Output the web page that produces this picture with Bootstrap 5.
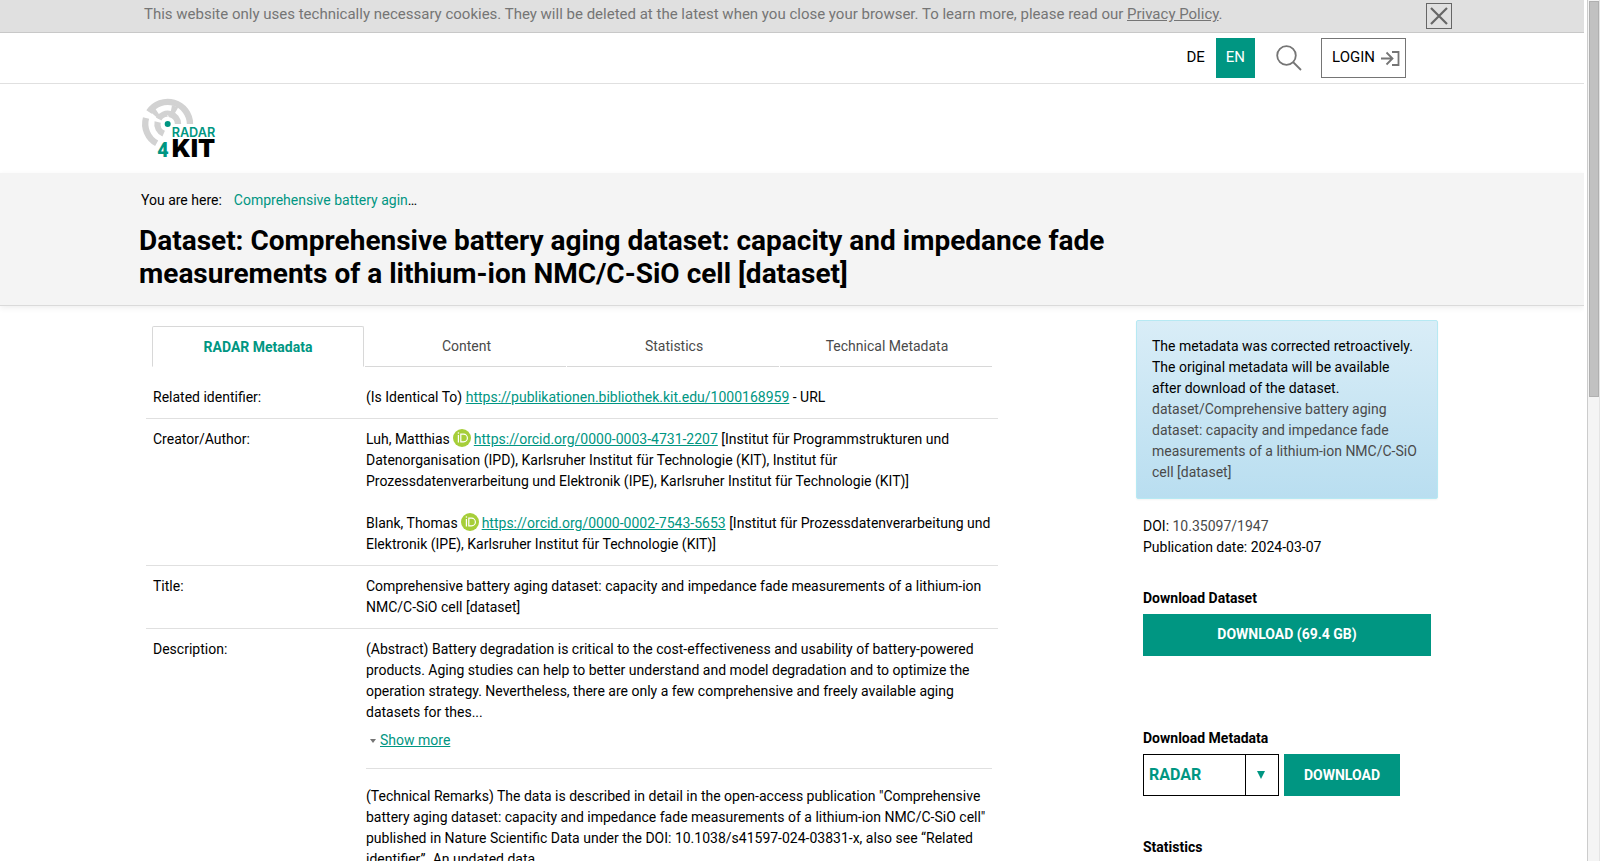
<!DOCTYPE html>
<html lang="en">
<head>
<meta charset="utf-8">
<meta name="viewport" content="width=device-width, initial-scale=1">
<title>Dataset: Comprehensive battery aging dataset</title>
<link href="https://cdn.jsdelivr.net/npm/bootstrap@5.3.0/dist/css/bootstrap.min.css" rel="stylesheet">
<style>
:root { --kit: #009682; --line: #e0e0e0; }
body { font-family: Roboto, "Liberation Sans", sans-serif; font-size: 14px; line-height: 21px; color: #000; background: #fff; }
a { color: var(--kit); }
.page-body { min-width: 0; }
.scroll-gutter { flex: 0 0 13px; margin-left: 3px; padding: 1px 0 0 1px; background: #f4f4f4; border-left: 1px solid #ccc; border-right: 1px solid #e4e4e4; }
.scroll-thumb { height: 46%; background: #c1c1c1; border: 1px solid #b0b0b0; }

.cookie-bar { background: #e0e0e0; border-bottom: 1px solid #c8c8c8; color: #757575; font-size: 15px; height: 33px; }
.cookie-bar .container { padding-right: 0; }
.cookie-bar a { color: #757575; }
.cookie-bar p { line-height: 28px; }
.close-btn { width: 26px; height: 26px; margin: 3px 0 0; border: 1px solid #666; background: none; padding: 0; }

.top-nav { border-bottom: 1px solid var(--line); height: 51px; font-size: 15px; }
.top-nav .container { padding-right: 46px; }
.lang-link { line-height: 38px; height: 40px; padding: 0 10px; color: #000; text-decoration: none; }
.lang-link.current { background: var(--kit); color: #fff; }
.lang-link:not(.current) { padding-right: 11px; }
.search-btn { border: 0; background: none; padding: 0; margin: 0 19px 0 21px; height: 40px; }
.login-btn { height: 40px; border: 1px solid #757575; background: #fff; color: #000; padding: 0 5px 0 10px; gap: 6px; line-height: 36px; }
.login-btn svg { margin-top: 12px; }
.search-btn svg { display: block; margin-top: 0; }

.brand-row { height: 89px; padding-top: 14px; }
.brand-row .container { padding-left: 9px; }
.title-band { background: #f4f4f4; border-bottom: 1px solid #dadada; box-shadow: 0 2px 6px rgba(0,0,0,.07); padding: 17px 0 15px; }
.title-band .container { padding-left: 7px; }
.crumbs { padding-left: 2px; gap: 12px; }
.title-band h1 { font-size: 28px; line-height: 33px; font-weight: 700; margin: 13px 0 0; max-width: 1000px; }

.content-row { padding: 14px 14px 0; }
.meta-col { flex: 0 1 852px; padding-top: 6px; min-width: 0; }
.side-col { flex: 0 0 302px; }
.meta-tabs { margin: 0 6px; border: 0; }
.meta-tabs .nav-item { flex: 213 1 0; }
.meta-tabs .nav-item.narrow { flex-grow: 202; }
.meta-tabs .nav-link { width: 100%; height: 41px; padding: 0 0 0 2px; margin: 0; line-height: 40px; border: 0; border-bottom: 1px solid #d8d8d8; border-radius: 0; color: #4a4a4a; }
.meta-tabs .nav-item + .nav-item { padding-left: 1px; }
.meta-tabs .nav-link.active { padding: 0; border: 1px solid #d8d8d8; border-bottom-color: #fff; border-radius: 2px 2px 0 0; line-height: 38px; color: var(--kit); font-weight: 700; background: #fff; }

.meta-table { width: 100%; margin-top: 10px; }
.meta-table tr + tr { border-top: 1px solid var(--line); }
.meta-table th { width: 220px; font-weight: 400; padding: 10px 7px; vertical-align: top; }
.meta-table td { padding: 10px 6px 10px 0; vertical-align: top; }
.orcid { width: 18px; height: 18px; margin: -5px -1px -1px 0; vertical-align: middle; }
.value-rule { border: 0; border-top: 1px solid var(--line); opacity: 1; margin: 17px 0; }
.more { margin-top: 7px; padding-left: 4px; gap: 4px; }

.notice { border: 1px solid #b6e9f3; border-radius: 2px; background: linear-gradient(#d9edf7, #b9def0); padding: 15px; box-shadow: 0 1px 2px rgba(0,0,0,.05); }
.soft { color: #4a4a4a; text-decoration: none; }
.side-inner { padding: 17px 7px 0; }
.side-head { font-size: 14px; line-height: 21px; font-weight: 700; margin: 0 0 5px; }
.published { margin-bottom: 30px; }
.kit-btn { background: var(--kit); border: 0; color: #fff; font-weight: 700; height: 42px; }
.dl-full { margin-bottom: 72px; padding-bottom: 3px; }
.dl-half { width: 116px; }
.format-row { gap: 5px; margin-bottom: 41px; }
.format-box { position: relative; width: 136px; }
.format-box select { appearance: none; width: 100%; height: 42px; border: 1px solid #000; border-radius: 0; background: #fff; color: var(--kit); font-size: 16px; font-weight: 700; padding: 0 5px 2px; }
.format-arrow { position: absolute; top: 0; right: 0; width: 34px; height: 42px; border-left: 1px solid #000; padding-right: 3px; pointer-events: none; }
</style>
</head>
<body>
<div class="d-flex vh-100 overflow-hidden">
  <div class="page-body flex-grow-1 overflow-hidden">
    <div class="cookie-bar">
      <div class="container d-flex justify-content-between align-items-start">
        <p class="mb-0">This website only uses technically necessary cookies. They will be deleted at the latest when you close your browser. To learn more, please read our <a href="#">Privacy Policy</a>.</p>
        <button type="button" class="close-btn d-flex justify-content-center align-items-center" aria-label="Close">
          <svg width="18" height="18" viewBox="0 0 18 18" stroke="#666" stroke-width="2.2"><path d="M1 1 17 17M17 1 1 17"/></svg>
        </button>
      </div>
    </div>

    <nav class="top-nav">
      <div class="container h-100 d-flex justify-content-end align-items-center">
        <a class="lang-link" href="#">DE</a>
        <a class="lang-link current" href="#">EN</a>
        <button type="button" class="search-btn" aria-label="Search">
          <svg width="26" height="26" viewBox="0 0 26 26" fill="none" stroke="#757575" stroke-width="1.8"><circle cx="10.5" cy="10.5" r="9.3"/><path d="M17 17 25 25"/></svg>
        </button>
        <button type="button" class="login-btn d-flex align-items-start">LOGIN
          <svg width="19" height="15" viewBox="0 0 19 15" fill="none" stroke="#757575" stroke-width="1.8"><path d="M0 7.5H11M5.5 1.5 11.5 7.5 5.5 13.5M11 1H17.5V14H11"/></svg>
        </button>
      </div>
    </nav>

    <header class="brand-row">
      <div class="container">
        <a href="#" class="d-inline-block" aria-label="RADAR4KIT">
          <svg class="d-block overflow-visible" width="76" height="60" viewBox="33 24 228 180">
            <g fill="none" stroke="#d2d2d2" stroke-width="19">
              <path d="M180 102A67 67 0 0 0 57 66"/>
              <path d="M48 84A67 67 0 0 0 80 160"/>
              <path d="M144 102A31 31 0 0 0 86 87"/>
              <path d="M83 96A31 31 0 0 0 101 131"/>
            </g>
            <path fill="#d2d2d2" d="M52 58 70 47 92 80 86 87ZM126 46 145 52 131 76 121 72Z"/>
            <path stroke="#fff" stroke-width="3" d="M113 76 118 91"/>
            <circle cx="113" cy="102" r="9" fill="#009682"/>
            <text x="125" y="140" font-family="Inter, sans-serif" font-size="38" font-weight="600" fill="#009682">RADAR</text>
            <text x="82" y="200" font-family="Roboto, sans-serif" font-size="59" font-weight="900" fill="#009682">4</text>
            <text x="125" y="200" font-family="Inter, sans-serif" font-size="75" font-weight="900" fill="#000">KIT</text>
          </svg>
        </a>
      </div>
    </header>

    <section class="title-band">
      <div class="container">
        <div class="crumbs d-flex"><span>You are here:</span><span><a href="#" class="text-decoration-none">Comprehensive battery agin</a>…</span></div>
        <h1>Dataset: Comprehensive battery aging dataset: capacity and impedance fade measurements of a lithium-ion NMC/C-SiO cell [dataset]</h1>
      </div>
    </section>

    <div class="container content-row d-flex justify-content-between align-items-start">
      <main class="meta-col">
        <ul class="nav nav-tabs meta-tabs flex-nowrap">
          <li class="nav-item"><button type="button" class="nav-link active">RADAR Metadata</button></li>
          <li class="nav-item narrow"><button type="button" class="nav-link">Content</button></li>
          <li class="nav-item"><button type="button" class="nav-link">Statistics</button></li>
          <li class="nav-item"><button type="button" class="nav-link">Technical Metadata</button></li>
        </ul>
        <table class="meta-table">
          <tbody>
          <tr>
            <th scope="row">Related identifier:</th>
            <td>(Is Identical To) <a href="#">https://publikationen.bibliothek.kit.edu/1000168959</a> - URL</td>
          </tr>
          <tr>
            <th scope="row">Creator/Author:</th>
            <td>
              Luh, Matthias <svg class="orcid" viewBox="0 0 18 18"><circle cx="9" cy="9" r="9" fill="#a6ce39"/><path fill="none" stroke="#fff" stroke-width="1.2" d="M5.4 6V13.4M7.8 5.2H10.6A3.8 3.8 0 0 1 10.6 12.8H7.8Z"/><circle cx="5.4" cy="4" r=".8" fill="#fff"/></svg> <a href="#">https://orcid.org/0000-0003-4731-2207</a> [Institut für Programmstrukturen und Datenorganisation (IPD), Karlsruher Institut für Technologie (KIT), Institut für Prozessdatenverarbeitung und Elektronik (IPE), Karlsruher Institut für Technologie (KIT)]<br><br>
              Blank, Thomas <svg class="orcid" viewBox="0 0 18 18"><circle cx="9" cy="9" r="9" fill="#a6ce39"/><path fill="none" stroke="#fff" stroke-width="1.2" d="M5.4 6V13.4M7.8 5.2H10.6A3.8 3.8 0 0 1 10.6 12.8H7.8Z"/><circle cx="5.4" cy="4" r=".8" fill="#fff"/></svg> <a href="#">https://orcid.org/0000-0002-7543-5653</a> [Institut für Prozessdatenverarbeitung und Elektronik (IPE), Karlsruher Institut für Technologie (KIT)]
            </td>
          </tr>
          <tr>
            <th scope="row">Title:</th>
            <td>Comprehensive battery aging dataset: capacity and impedance fade measurements of a lithium-ion NMC/C-SiO cell [dataset]</td>
          </tr>
          <tr>
            <th scope="row">Description:</th>
            <td>
              (Abstract) Battery degradation is critical to the cost-effectiveness and usability of battery-powered products. Aging studies can help to better understand and model degradation and to optimize the operation strategy. Nevertheless, there are only a few comprehensive and freely available aging datasets for thes...
              <div class="more d-flex align-items-center"><svg width="6" height="4" viewBox="0 0 6 4"><path fill="#757575" d="M0 0H6L3 4Z"/></svg><a href="#">Show more</a></div>
              <hr class="value-rule">
              (Technical Remarks) The data is described in detail in the open-access publication "Comprehensive battery aging dataset: capacity and impedance fade measurements of a lithium-ion NMC/C-SiO cell" published in Nature Scientific Data under the DOI: 10.1038/s41597-024-03831-x, also see “Related identifier”. An updated data...
            </td>
          </tr>
          </tbody>
        </table>
      </main>

      <aside class="side-col">
        <div class="notice">The metadata was corrected retroactively. The original metadata will be available after download of the dataset.<br><a href="#" class="soft">dataset/Comprehensive battery aging dataset: capacity and impedance fade measurements of a lithium-ion NMC/C-SiO cell [dataset]</a></div>
        <div class="side-inner">
          <div>DOI: <a href="#" class="soft">10.35097/1947</a></div>
          <div class="published">Publication date: 2024-03-07</div>
          <h2 class="side-head">Download Dataset</h2>
          <button type="button" class="kit-btn dl-full w-100">DOWNLOAD (69.4 GB)</button>
          <h2 class="side-head"><label for="fmt">Download Metadata</label></h2>
          <div class="format-row d-flex">
            <div class="format-box">
              <select id="fmt"><option>RADAR</option><option>DataCite</option></select>
              <span class="format-arrow d-flex align-items-center justify-content-center"><svg width="8" height="8" viewBox="0 0 8 8"><path fill="#009682" d="M0 0H8L4 8Z"/></svg></span>
            </div>
            <button type="button" class="kit-btn dl-half">DOWNLOAD</button>
          </div>
          <h2 class="side-head">Statistics</h2>
        </div>
      </aside>
    </div>
  </div>
  <div class="scroll-gutter" aria-hidden="true"><div class="scroll-thumb"></div></div>
</div>
<script src="https://cdn.jsdelivr.net/npm/bootstrap@5.3.0/dist/js/bootstrap.bundle.min.js"></script>
</body>
</html>
